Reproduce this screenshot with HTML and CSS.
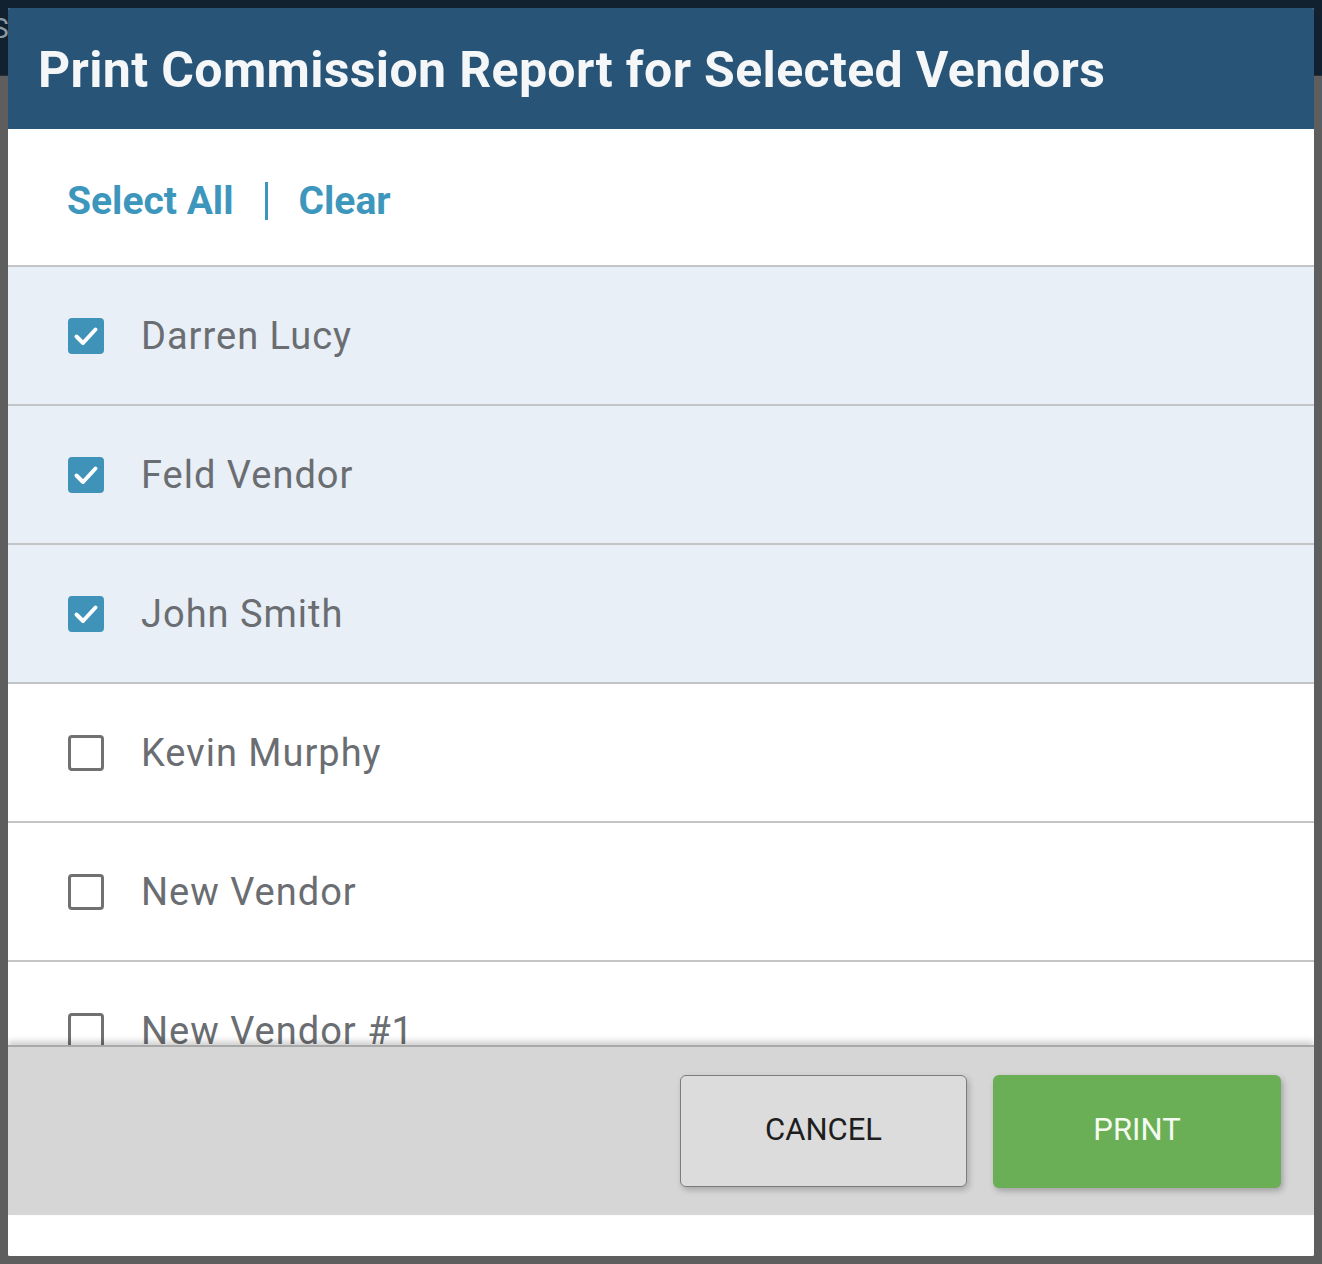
FILE: index.html
```html
<!DOCTYPE html>
<html>
<head>
    <meta charset="UTF-8">
    <title>Print Commission Report</title>
    <link rel="stylesheet" href="styles.css">
</head>
<body>
<div class="backdrop">
    <span class="behind">S</span>
</div>
<section class="dialog">
    <div class="dialogHead">
        <h1>Print Commission Report for Selected Vendors</h1>
    </div>

    <div class="toolbar">
        <a href="#" class="link">Select All</a>
        <em class="sep"></em>
        <a href="#" class="link">Clear</a>
    </div>

    <ul class="list">
        <li class="row checked">
            <span class="box"><svg viewBox="0 0 36 36"><polyline points="8.5,18.5 15,25 27.5,11.5"/></svg></span>
            <span class="name">Darren Lucy</span>
        </li>
        <li class="row checked">
            <span class="box"><svg viewBox="0 0 36 36"><polyline points="8.5,18.5 15,25 27.5,11.5"/></svg></span>
            <span class="name">Feld Vendor</span>
        </li>
        <li class="row checked">
            <span class="box"><svg viewBox="0 0 36 36"><polyline points="8.5,18.5 15,25 27.5,11.5"/></svg></span>
            <span class="name">John Smith</span>
        </li>
        <li class="row">
            <span class="box"></span>
            <span class="name">Kevin Murphy</span>
        </li>
        <li class="row">
            <span class="box"></span>
            <span class="name">New Vendor</span>
        </li>
        <li class="row">
            <span class="box"></span>
            <span class="name">New Vendor #1</span>
        </li>
    </ul>

    <div class="footer">
        <div class="btn cancel">CANCEL</div>
        <div class="btn print">PRINT</div>
    </div>
    <div class="bottom"></div>
</section>
</body>
</html>
```

FILE: styles.css
```css
* {
    margin: 0;
    padding: 0;
    box-sizing: border-box;
    font-family: Roboto, "Liberation Sans", sans-serif;
}

a, a:hover, a:visited {
    text-decoration: none;
}

ul {
    list-style: none;
}

html, body {
    width: 100%;
    height: 100%;
    overflow: hidden;
}

body {
    position: relative;
    padding: 8px;
    background: #5e5e5e;
}

/* page under the overlay */
.backdrop {
    position: absolute;
    top: 0;
    left: 0;
    width: 100%;
    height: 76px;
    background: #112130;
    border-bottom: 1px solid #2a2f35;
}

.behind {
    position: absolute;
    left: -8px;
    top: 12px;
    font-size: 28px;
    color: #8b98a6;
}

.dialog {
    position: relative;
    display: flex;
    flex-direction: column;
    width: 1306px;
    height: 1248px;
    background: #fff;
    border-radius: 2px;
    overflow: hidden;
}

.dialogHead {
    display: flex;
    align-items: center;
    height: 121px;
    padding: 3px 0 0 30px;
    background: #285577;
}

.dialogHead h1 {
    font-size: 50px;
    font-weight: 700;
    color: #f4f6f8;
    letter-spacing: 0.35px;
}

.toolbar {
    display: flex;
    align-items: center;
    height: 136px;
    padding: 8px 0 0 59px;
}

.link {
    font-size: 39px;
    font-weight: 700;
    color: #3d96bc;
}

.sep {
    display: block;
    width: 3px;
    height: 38px;
    margin: 0 31px;
    background: #3d96bc;
}

.list {
    height: 780px;
    overflow: hidden;
}

.row {
    display: flex;
    align-items: center;
    gap: 37px;
    height: 139px;
    padding-left: 60px;
    border-top: 2px solid #c3c4c5;
    background: #fff;
}

.row.checked {
    background: #e8eff6;
}

.box {
    display: block;
    width: 36px;
    height: 36px;
    border: 3px solid #717171;
    border-radius: 4px;
}

.checked .box {
    border: none;
    background: #3f93b9;
}

.box svg {
    display: block;
    width: 36px;
    height: 36px;
}

.box polyline {
    fill: none;
    stroke: #fff;
    stroke-width: 4;
    stroke-linecap: round;
    stroke-linejoin: round;
}

.name {
    font-size: 38px;
    letter-spacing: 1px;
    color: #6a6d71;
}

.footer {
    position: relative;
    display: flex;
    justify-content: flex-end;
    align-items: center;
    gap: 26px;
    height: 170px;
    padding-right: 33px;
    background: #d6d6d6;
    border-top: 2px solid #a9a9a9;
    box-shadow: 0 -4px 6px rgba(0, 0, 0, 0.18);
}

.btn {
    display: flex;
    justify-content: center;
    align-items: center;
    width: 287px;
    height: 112px;
    border-radius: 6px;
    font-size: 31px;
    padding-bottom: 4px;
    cursor: pointer;
}

.cancel {
    background: #dcdcdc;
    border: 1.5px solid #7c7c7c;
    color: #1e1e1e;
    box-shadow: 2px 3px 6px rgba(0, 0, 0, 0.22);
}

.print {
    width: 288px;
    height: 113px;
    background: #6aae55;
    color: #f4fbf1;
    box-shadow: 2px 3px 6px rgba(0, 0, 0, 0.25);
}

.bottom {
    flex: 1;
    background: #fff;
}
```
